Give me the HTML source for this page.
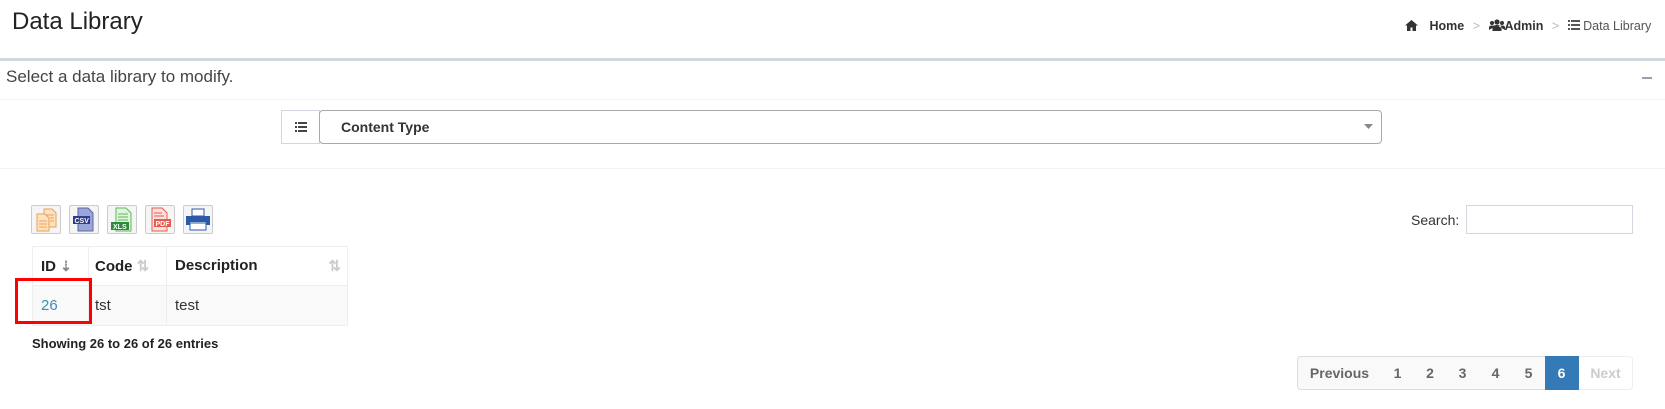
<!DOCTYPE html>
<html><head><meta charset="utf-8"><style>
*{box-sizing:border-box;margin:0;padding:0}
body{width:1665px;height:409px;background:#fff;font-family:"Liberation Sans",Arial,sans-serif;color:#333;position:relative;overflow:hidden}
.a{position:absolute}
.pg{position:absolute;top:356px;height:34px;border:1px solid #ddd;border-left:none;background:#f9f9f9;color:#666;font-weight:bold;font-size:14px;line-height:32px;text-align:center}
.eb{position:absolute;top:205px;width:30px;height:29px;border:1px solid #ccc;border-radius:2px;background:#f5f5f5}
th,td{border:1px solid #eee;text-align:left}
</style></head><body>
<div class="a" style="left:12px;top:8px;font-size:24px;color:#222">Data Library</div>
<div class="a" style="left:1405px;top:18px;font-size:12.5px;color:#333;white-space:nowrap;line-height:16px">
<svg width="13" height="11" viewBox="0 0 13 11" style="vertical-align:-1px"><path d="M6.5 0L0 5.5h2V11h3.5V7.5h2V11H11V5.5h2z" fill="#333"/></svg>
<b style="margin-left:8px">Home</b> <span style="color:#bbb;margin:0 5px">&gt;</span>
<svg width="16" height="12" viewBox="0 0 16 12" style="vertical-align:-1px"><circle cx="8" cy="3" r="2.6" fill="#333"/><circle cx="3" cy="4" r="2" fill="#333"/><circle cx="13" cy="4" r="2" fill="#333"/><path d="M3.5 12V9q0-3 4.5-3t4.5 3v3z M0 11V8.5q0-2 3-2t3 1z M16 11V8.5q0-2-3-2t-3 1z" fill="#333"/></svg><b>Admin</b> <span style="color:#bbb;margin:0 5px">&gt;</span>
<svg width="12" height="10" viewBox="0 0 12 10" style="vertical-align:0"><path d="M0 0h2v2H0zM3 0h9v2H3zM0 4h2v2H0zM3 4h9v2H3zM0 8h2v2H0zM3 8h9v2H3z" fill="#555"/></svg> <span style="color:#555">Data Library</span></div>
<div class="a" style="left:0;top:58px;width:1665px;height:3px;background:#d2d6de"></div>
<div class="a" style="left:6px;top:67px;font-size:17px;color:#444">Select a data library to modify.</div>
<div class="a" style="left:1642px;top:77px;width:10px;height:2px;background:#97a0b3"></div>
<div class="a" style="left:0;top:99px;width:1665px;height:1px;background:#f4f4f4"></div>
<div class="a" style="left:281px;top:110px;width:39px;height:34px;border:1px solid #d2d6de;background:#fff">
<svg class="a" style="left:13px;top:11px" width="12" height="10" viewBox="0 0 12 10"><path d="M0 0h2v2H0zM3 0h9v2H3zM0 4h2v2H0zM3 4h9v2H3zM0 8h2v2H0zM3 8h9v2H3z" fill="#444"/></svg></div>
<div class="a" style="left:319px;top:110px;width:1063px;height:34px;border:1px solid #aaa;border-radius:4px;background:#fff;font-weight:bold;font-size:14px;line-height:32px;padding-left:21px;color:#333">Content Type
<svg class="a" style="right:8px;top:13px" width="9" height="5"><path d="M0 0h9L4.5 5z" fill="#888"/></svg></div>
<div class="a" style="left:0;top:168px;width:1665px;height:1px;background:#f4f4f4"></div>

<div class="eb" style="left:31px"><svg width="28" height="27" viewBox="0 0 28 27"><path d="M12 3h8l4 4v14H12z" fill="#fde3c4" stroke="#f0a050"/><path d="M5 8h8l4 4v13H5z" fill="#fde3c4" stroke="#f0a050"/><path d="M7 15h8M7 18h8M7 21h8M14 9h8M18 12h4M18 15h4" stroke="#f0a050"/></svg></div>
<div class="eb" style="left:69px"><svg width="28" height="27" viewBox="0 0 28 27"><path d="M8 2h10l5 5v18H8z" fill="#9aa5d9" stroke="#5a66a8"/><rect x="3" y="10" width="17" height="8" fill="#2e3d8f"/><text x="4.5" y="17" font-size="7" font-weight="bold" fill="#fff" font-family="Liberation Sans">CSV</text></svg></div>
<div class="eb" style="left:107px"><svg width="28" height="27" viewBox="0 0 28 27"><path d="M8 2h10l5 5v18H8z" fill="#e2f4dc" stroke="#5cb85c"/><path d="M10 8h10M10 11h10M10 14h10" stroke="#5cb85c"/><rect x="3" y="16" width="18" height="8" fill="#2e8b3a"/><text x="5" y="23" font-size="7" font-weight="bold" fill="#fff" font-family="Liberation Sans">XLS</text></svg></div>
<div class="eb" style="left:145px"><svg width="28" height="27" viewBox="0 0 28 27"><path d="M6 2h10l5 5v18H6z" fill="#fde0de" stroke="#e25b4f"/><path d="M8 7h8M8 10h10" stroke="#e25b4f"/><rect x="8" y="13" width="17" height="8" fill="#e25b4f"/><text x="9.5" y="20" font-size="7" font-weight="bold" fill="#fff" font-family="Liberation Sans">PDF</text></svg></div>
<div class="eb" style="left:183px"><svg width="28" height="27" viewBox="0 0 28 27"><path d="M8 3h12v7H8z" fill="#fff" stroke="#2b5ba8"/><path d="M2 10h24v9h-4v-3H6v3H2z" fill="#2b5ba8"/><path d="M6 17h16v7H6z" fill="#fff" stroke="#2b5ba8"/></svg></div>

<div class="a" style="left:1411px;top:212px;font-size:14px;color:#333">Search:</div>
<div class="a" style="left:1466px;top:205px;width:167px;height:29px;border:1px solid #d2d6de;background:#fff"></div>

<table class="a" style="left:32px;top:246px;width:316px;border-collapse:collapse;font-size:15px">
<tr style="height:39px;font-weight:bold;color:#222"><th style="width:56px;padding-left:8px">ID <span style="color:#888;font-size:14px">⇣</span></th><th style="width:78px;padding-left:6px">Code <span style="color:#ccc">⇅</span></th><th style="padding-left:8px">Description<span style="float:right;color:#ccc;margin-right:6px">⇅</span></th></tr>
<tr style="height:40px;background:#f9f9f9"><td style="padding-left:8px;color:#3c8dbc">26</td><td style="padding-left:6px">tst</td><td style="padding-left:8px">test</td></tr>
</table>
<div class="a" style="left:15px;top:278px;width:77px;height:46px;border:3px solid #f00"></div>
<div class="a" style="left:32px;top:336px;font-size:13px;font-weight:bold;color:#222">Showing 26 to 26 of 26 entries</div>

<div class="pg" style="left:1297px;width:85px;border-left:1px solid #ddd;border-radius:4px 0 0 4px">Previous</div>
<div class="pg" style="left:1381px;width:34px">1</div>
<div class="pg" style="left:1414px;width:33px">2</div>
<div class="pg" style="left:1446px;width:34px">3</div>
<div class="pg" style="left:1479px;width:34px">4</div>
<div class="pg" style="left:1512px;width:34px">5</div>
<div class="pg" style="left:1545px;width:34px;background:#337ab7;border-color:#337ab7;color:#fff">6</div>
<div class="pg" style="left:1579px;width:54px;background:#fff;color:#ccc;border-color:#eee;border-radius:0 4px 4px 0">Next</div>
</body></html>
